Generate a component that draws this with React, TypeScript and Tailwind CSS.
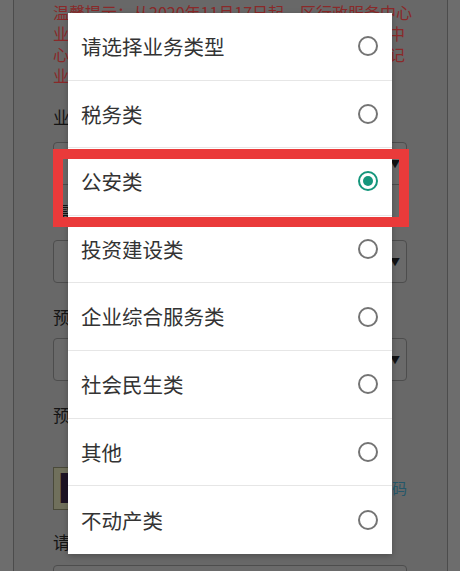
import React, { useState } from 'react';

const businessTypes = [
  '请选择业务类型',
  '税务类',
  '公安类',
  '投资建设类',
  '企业综合服务类',
  '社会民生类',
  '其他',
  '不动产类',
];

const noticeLines = [
  '温馨提示：从2020年11月17日起，区行政服务中心',
  '业务办理实行网上预约制度，请提前预约后前往中',
  '心办理，未预约的群众请到现场取号窗口进行登记',
  '业务办理。',
];

// 下拉框（被遮罩压暗后的样子）
const FakeSelect: React.FC<{ className?: string }> = ({ className = '' }) => (
  <div className={`h-[43px] w-[354px] rounded-[4px] border border-[#4d4d4d] bg-[#6a6a6a] flex items-center justify-end pr-[6px] ${className}`}>
    <span className="text-[10px] leading-none text-[#111]">▼</span>
  </div>
);

const Radio: React.FC<{ checked: boolean }> = ({ checked }) =>
  checked ? (
    <span className="w-[20px] h-[20px] rounded-full border-2 border-[#15967c] flex items-center justify-center">
      <span className="w-[10px] h-[10px] rounded-full bg-[#15967c]" />
    </span>
  ) : (
    <span className="w-[20px] h-[20px] rounded-full border-2 border-[#747474]" />
  );

const App: React.FC = () => {
  const [selected, setSelected] = useState(2);

  return (
    <div className="relative w-[460px] h-[571px] overflow-hidden bg-[#6d6d6d] font-['Noto_Sans_CJK_SC','Noto_Sans',sans-serif]">
      {/* 背景表单 */}
      <div className="ml-[13px] w-[435px] h-full border-x border-[#4c4c4c] bg-[#686868] pl-[39px]">
        <div className="pt-[2px] text-[16px] leading-[21px] text-[#8a2929]">
          {noticeLines.map((line) => (
            <div key={line} className="whitespace-nowrap">{line}</div>
          ))}
        </div>

        <div className="mt-[19px] text-[17px] leading-[24px] text-[#141414]">业务类型</div>
        <FakeSelect className="mt-[13px]" />

        <div className="mt-[15px] text-[17px] leading-[24px] text-[#141414]">需办理事项</div>
        <FakeSelect className="mt-[16px]" />

        <div className="mt-[22px] text-[17px] leading-[24px] text-[#141414]">预约日期</div>
        <FakeSelect className="mt-[9px]" />

        <div className="mt-[22px] text-[17px] leading-[24px] text-[#141414]">预约时间段</div>

        <div className="mt-[40px] w-[354px] h-[43px] flex items-center justify-between">
          <div className="h-[43px] w-[96px] border border-[#4a4a3a] bg-[#70705c] flex items-center pl-[3px]">
            <span className="text-[40px] leading-none font-bold text-[#1d1424] font-['DejaVu_Sans',sans-serif]">F</span>
          </div>
          <span className="text-[15px] text-[#24576a]">看不清？刷新验证码</span>
        </div>

        <div className="mt-[20px] text-[17px] leading-[24px] text-[#141414]">请输入验证码</div>
        <div className="mt-[11px] h-[43px] w-[354px] rounded-[4px] border border-[#4d4d4d] bg-[#6a6a6a]" />
      </div>

      {/* 业务类型选择弹窗 */}
      <div className="absolute left-[68px] top-[13px] w-[324px] bg-white shadow-[0_2px_6px_rgba(0,0,0,0.25)]">
        {businessTypes.map((name, i) => (
          <button
            key={name}
            type="button"
            onClick={() => setSelected(i)}
            className={`w-full h-[67.6px] flex items-center justify-between pl-[13px] pr-[14px] text-left ${
              i < businessTypes.length - 1 ? 'border-b border-[#e6e6e6]' : ''
            }`}
          >
            <span className="text-[20.5px] leading-none text-[#333]">{name}</span>
            <Radio checked={selected === i} />
          </button>
        ))}
      </div>

      {/* 红色标注框 */}
      <div className="absolute left-[53px] top-[149px] w-[356px] h-[78px] border-[10px] border-[#ea3a3a] pointer-events-none" />
    </div>
  );
};

export default App;
